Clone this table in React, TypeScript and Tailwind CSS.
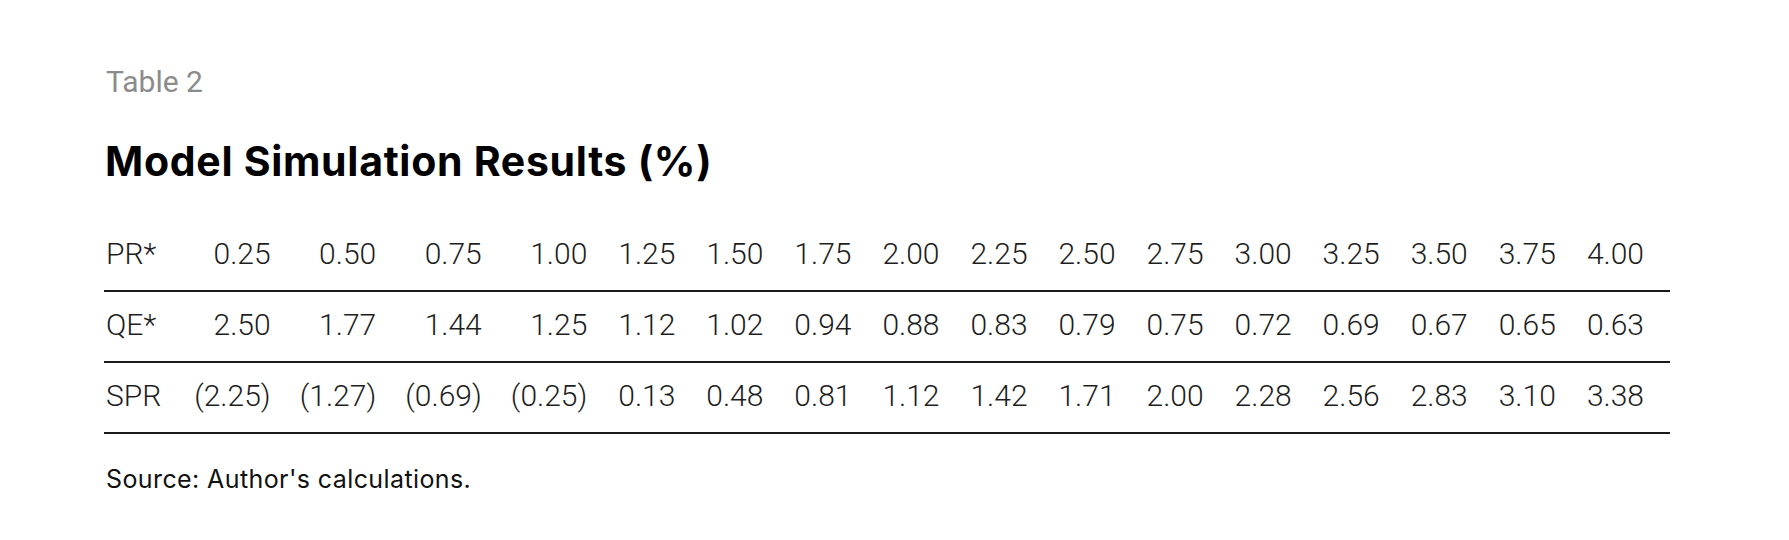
import React from "react";

const rows: { label: string; values: string[] }[] = [
  {
    label: "PR*",
    values: ["0.25", "0.50", "0.75", "1.00", "1.25", "1.50", "1.75", "2.00", "2.25", "2.50", "2.75", "3.00", "3.25", "3.50", "3.75", "4.00"],
  },
  {
    label: "QE*",
    values: ["2.50", "1.77", "1.44", "1.25", "1.12", "1.02", "0.94", "0.88", "0.83", "0.79", "0.75", "0.72", "0.69", "0.67", "0.65", "0.63"],
  },
  {
    label: "SPR",
    values: ["(2.25)", "(1.27)", "(0.69)", "(0.25)", "0.13", "0.48", "0.81", "1.12", "1.42", "1.71", "2.00", "2.28", "2.56", "2.83", "3.10", "3.38"],
  },
];

export default function App() {
  return (
    <div
      className="w-[1789px] h-[540px] bg-white pl-[104px] pt-[64px]"
      style={{ fontFamily: "Roboto, 'Liberation Sans', sans-serif" }}
    >
      <div className="text-[30px] leading-[35px] text-[#8c8c8c] pl-[2px]">Table 2</div>
      <h1
        className="mt-[37px] text-[41px] leading-[50px] font-bold text-black pl-[1px] tracking-[0.7px]"
        style={{ fontFamily: "Inter, Roboto, sans-serif" }}
      >
        Model Simulation Results (%)
      </h1>
      <table className="mt-[35px] w-[1566px] table-fixed border-collapse text-[30px] leading-[35px] font-light text-[#1e1e1e]">
        <colgroup>
          <col className="w-[87px]" />
          <col className="w-[105.5px]" />
          <col className="w-[105.5px]" />
          <col className="w-[105.5px]" />
          <col className="w-[105.5px]" />
          {Array.from({ length: 12 }).map((_, i) => (
            <col key={i} className="w-[88px]" />
          ))}
        </colgroup>
        <tbody>
          {rows.map((r) => (
            <tr key={r.label} className="border-b-2 border-[#1a1a1a]">
              <td className="pt-[15px] pb-[19px] pl-[2px] text-left whitespace-nowrap">{r.label}</td>
              {r.values.map((v, i) => (
                <td key={i} className="pt-[15px] pb-[19px] pr-[26px] text-right whitespace-nowrap">
                  {v}
                </td>
              ))}
            </tr>
          ))}
        </tbody>
      </table>
      <div
        className="mt-[30px] text-[25px] leading-[30px] text-[#111] pl-[2px] tracking-[0.4px]"
        style={{ fontFamily: "Inter, Roboto, sans-serif" }}
      >
        Source: Author's calculations.
      </div>
    </div>
  );
}
